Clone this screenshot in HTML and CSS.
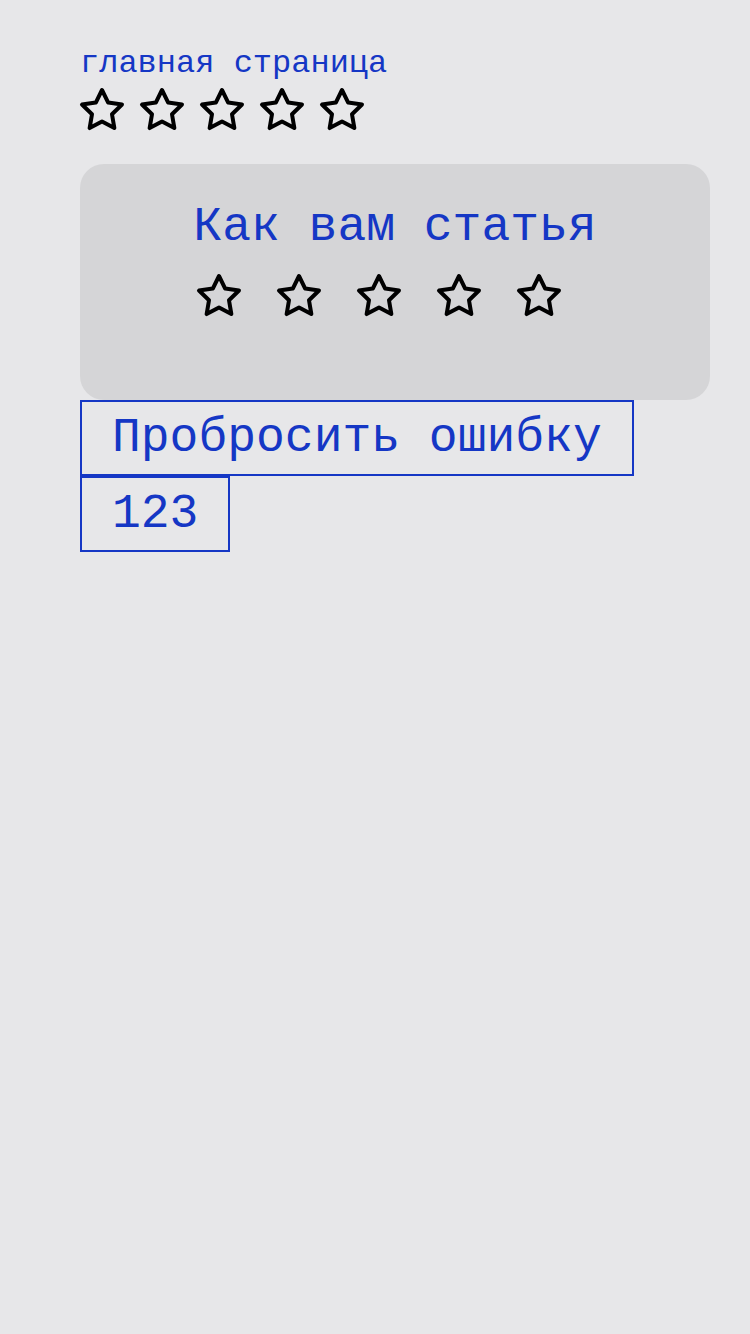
FILE: index.html
```html
<!DOCTYPE html>
<html lang="ru">
<head>
<meta charset="utf-8">
<title>главная страница</title>
<link rel="stylesheet" href="styles.css">
</head>
<body>
<main class="page">
  <h1 class="page-title">главная страница</h1>
  <div class="stars stars--top">
    <svg class="star" viewBox="0 0 24 24"><polygon points="12 2 15.09 8.26 22 9.27 17 14.14 18.18 21.02 12 17.77 5.82 21.02 7 14.14 2 9.27 8.91 8.26 12 2"/></svg>
    <svg class="star" viewBox="0 0 24 24"><polygon points="12 2 15.09 8.26 22 9.27 17 14.14 18.18 21.02 12 17.77 5.82 21.02 7 14.14 2 9.27 8.91 8.26 12 2"/></svg>
    <svg class="star" viewBox="0 0 24 24"><polygon points="12 2 15.09 8.26 22 9.27 17 14.14 18.18 21.02 12 17.77 5.82 21.02 7 14.14 2 9.27 8.91 8.26 12 2"/></svg>
    <svg class="star" viewBox="0 0 24 24"><polygon points="12 2 15.09 8.26 22 9.27 17 14.14 18.18 21.02 12 17.77 5.82 21.02 7 14.14 2 9.27 8.91 8.26 12 2"/></svg>
    <svg class="star" viewBox="0 0 24 24"><polygon points="12 2 15.09 8.26 22 9.27 17 14.14 18.18 21.02 12 17.77 5.82 21.02 7 14.14 2 9.27 8.91 8.26 12 2"/></svg>
  </div>
  <section class="rating-card">
    <h2 class="rating-title">Как вам статья</h2>
    <div class="stars stars--card">
      <svg class="star" viewBox="0 0 24 24"><polygon points="12 2 15.09 8.26 22 9.27 17 14.14 18.18 21.02 12 17.77 5.82 21.02 7 14.14 2 9.27 8.91 8.26 12 2"/></svg>
      <svg class="star" viewBox="0 0 24 24"><polygon points="12 2 15.09 8.26 22 9.27 17 14.14 18.18 21.02 12 17.77 5.82 21.02 7 14.14 2 9.27 8.91 8.26 12 2"/></svg>
      <svg class="star" viewBox="0 0 24 24"><polygon points="12 2 15.09 8.26 22 9.27 17 14.14 18.18 21.02 12 17.77 5.82 21.02 7 14.14 2 9.27 8.91 8.26 12 2"/></svg>
      <svg class="star" viewBox="0 0 24 24"><polygon points="12 2 15.09 8.26 22 9.27 17 14.14 18.18 21.02 12 17.77 5.82 21.02 7 14.14 2 9.27 8.91 8.26 12 2"/></svg>
      <svg class="star" viewBox="0 0 24 24"><polygon points="12 2 15.09 8.26 22 9.27 17 14.14 18.18 21.02 12 17.77 5.82 21.02 7 14.14 2 9.27 8.91 8.26 12 2"/></svg>
    </div>
  </section>
  <div class="actions">
    <button class="btn" type="button">Пробросить ошибку</button>
    <button class="btn" type="button">123</button>
  </div>
</main>
</body>
</html>
```

FILE: styles.css
```css
html, body {
  margin: 0;
  padding: 0;
  background: #e7e7e9;
}

body {
  font-family: "Courier New", "Nimbus Mono PS", "FreeMono", "Liberation Mono", monospace;
  color: #1537c5;
  min-height: 1334px;
}

.page {
  padding: 46px 40px 0 80px;
  display: flex;
  flex-direction: column;
  align-items: flex-start;
}

.page-title {
  margin: 0;
  font-size: 32px;
  font-weight: normal;
  line-height: 36px;
  color: #1537c5;
}

.stars {
  display: flex;
}

.stars--top {
  margin-top: 4px;
  gap: 12px;
  margin-left: -2px;
}

.star {
  width: 48px;
  height: 48px;
  display: block;
  flex: none;
}

.star polygon {
  fill: none;
  stroke: #000;
  stroke-width: 2;
  stroke-linejoin: round;
  stroke-linecap: round;
}

.rating-card {
  align-self: stretch;
  margin-top: 30px;
  background: #d5d5d7;
  border-radius: 24px;
  padding: 36px 0 80px;
  display: flex;
  flex-direction: column;
  align-items: center;
}

.rating-title {
  margin: 0;
  font-size: 48px;
  font-weight: normal;
  line-height: 54px;
  color: #1537c5;
}

.stars--card {
  margin-top: 18px;
}

.stars--card .star {
  margin-right: 32px;
}

.actions {
  display: flex;
  flex-direction: column;
  align-items: flex-start;
}

.btn {
  font-family: "Courier New", "Nimbus Mono PS", "FreeMono", "Liberation Mono", monospace;
  font-size: 48px;
  line-height: 54px;
  color: #1537c5;
  background: transparent;
  border: 2px solid #1537c5;
  border-radius: 0;
  padding: 9px 30px 9px;
  margin: 0;
  cursor: pointer;
}
```
